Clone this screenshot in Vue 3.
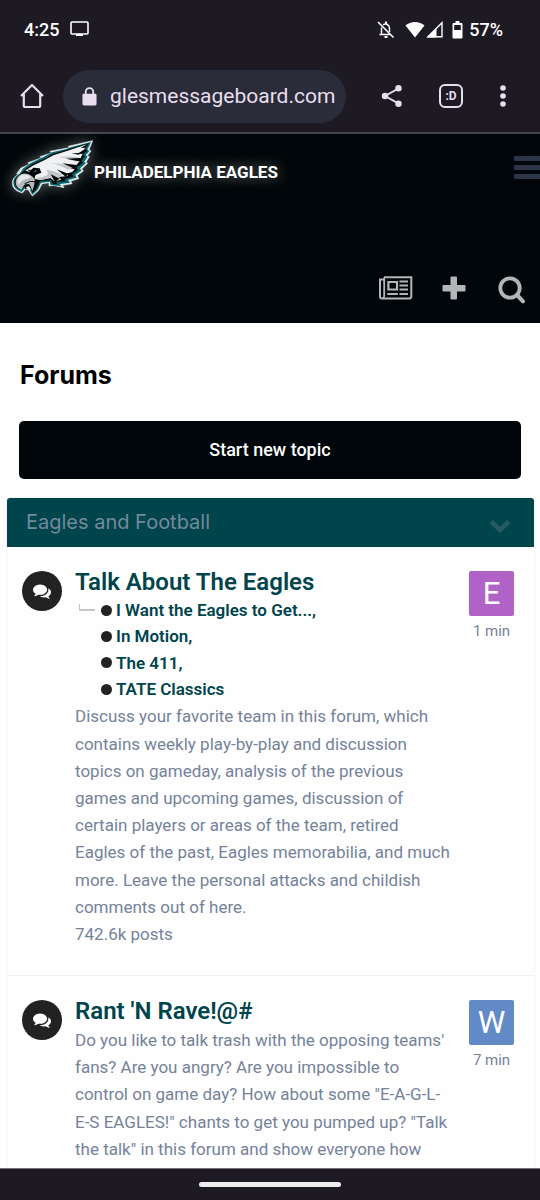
<script setup>
const forums = [
  {
    id: 'talk',
    title: 'Talk About The Eagles',
    children: ['I Want the Eagles to Get...,', 'In Motion,', 'The 411,', 'TATE Classics'],
    text: 'Discuss your favorite team in this forum, which contains weekly play-by-play and discussion topics on gameday, analysis of the previous games and upcoming games, discussion of certain players or areas of the team, retired Eagles of the past, Eagles memorabilia, and much more. Leave the personal attacks and childish comments out of here.',
    posts: '742.6k posts',
    letter: 'E',
    tone: 'purple',
    time: '1 min',
  },
  {
    id: 'rant',
    title: "Rant 'N Rave!@#",
    children: [],
    text: 'Do you like to talk trash with the opposing teams\' fans? Are you angry? Are you impossible to control on game day? How about some "E-A-G-L-E-S EAGLES!" chants to get you pumped up? "Talk the talk" in this forum and show everyone how',
    posts: '',
    letter: 'W',
    tone: 'blue',
    time: '7 min',
  },
]
</script>

<template>
  <div class="screen">
    <div class="status">
      <span class="clock">4:25</span>
      <svg class="cast" width="20" height="17" viewBox="0 0 20 17">
        <rect x="1" y="1" width="17" height="12" rx="1" fill="none" stroke="#fff" stroke-width="1.6" />
        <path d="M6 13h7v2H6z" fill="#fff" />
      </svg>
      <span class="grow"></span>
      <svg class="bell" width="18" height="18" viewBox="0 0 18 18" fill="none" stroke="#fff" stroke-width="1.5">
        <path d="M1 1l15.500 15.500M4.500 6.500V13M2.500 13.500H13M6 3.800C8.800 1.800 12.500 3.800 12.500 7.500V11" />
        <path d="M9 .5V3M7.500 16h3" stroke-width="2" />
      </svg>
      <svg class="wifi" width="20" height="17" viewBox="0 0 20 17">
        <path d="M10 16.500L.5 4.500Q4.500 1 10 1T19.500 4.500z" fill="#fff" />
      </svg>
      <svg class="signal" width="18" height="17" viewBox="0 0 18 17">
        <path d="M2 15.800L16 1.800V15.800z" fill="none" stroke="#fff" stroke-width="1.400" />
        <path d="M1 16.500L10.500 7V16.500z" fill="#fff" />
      </svg>
      <svg class="battery" width="11" height="18" viewBox="0 0 11 18">
        <path d="M3.500 0h4v2h2q1 0 1 1v13.500q0 1-1 1h-8q-1 0-1-1V3q0-1 1-1h2z" fill="#fff" />
        <path d="M2.200 4h6.600v5H2.200z" fill="#1d1a24" />
      </svg>
      <span class="clock">57%</span>
    </div>

    <div class="browser">
      <button class="tool home" aria-label="Home">
        <svg width="26" height="26" viewBox="0 0 26 26" fill="none" stroke="#e8deee" stroke-width="2.200" stroke-linejoin="round">
          <path d="M2 13L13 2L24 13M4.800 11V22.500Q4.800 24 6.300 24H19.700Q21.200 24 21.200 22.500V11" />
        </svg>
      </button>
      <div class="address">
        <svg width="15" height="19" viewBox="0 0 16 20">
          <path d="M4 8V5a4 4 0 0 1 8 0V8" fill="none" stroke="#e8deee" stroke-width="1.900" />
          <rect x=".5" y="7" width="15" height="12.500" rx="1.500" fill="#e8deee" />
        </svg>
        <input class="url" type="text" value="glesmessageboard.com" aria-label="Address" />
      </div>
      <button class="tool share" aria-label="Share">
        <svg width="22" height="24" viewBox="0 0 22 24">
          <path d="M17.500 4.500L4 12L17.500 19.500" fill="none" stroke="#e8deee" stroke-width="2" />
          <circle cx="17.500" cy="4.300" r="3.200" fill="#e8deee" />
          <circle cx="4" cy="12" r="3.200" fill="#e8deee" />
          <circle cx="17.500" cy="19.700" r="3.200" fill="#e8deee" />
        </svg>
      </button>
      <button class="tool tabs" aria-label="Tabs">:D</button>
      <button class="tool more" aria-label="More">
        <svg width="6" height="22" viewBox="0 0 6 22" fill="#e8deee">
          <circle cx="3" cy="3" r="2.800" />
          <circle cx="3" cy="11" r="2.800" />
          <circle cx="3" cy="19" r="2.800" />
        </svg>
      </button>
    </div>

    <header class="site">
      <div class="brandrow">
        <a class="brand" href="#">
          <svg class="eagle" width="84" height="62" viewBox="30 20 252 186" stroke-linejoin="round">
            <path d="M278 31L205 48L208 52L150 63L154 68L120 79L124 83L84 97L88 102L63 113L50 130L58 130Q38 140 37 157Q36 180 67 188L75 178L84 177L97 197L116 180L126 160L147 157L147 167L160 165L192 172L188 165L216 160L212 152L236 145L232 135L250 122L245 116L263 99L258 96L268 79L262 76L273 62L267 58Z" fill="#e6eaeb" stroke="#e6eaeb" stroke-width="2" />
            <path d="M273 35L212 51L198 57L156 66L132 79L94 97L70 114L58 131Q40 140 40 157Q41 177 65 185L73 175L87 174L97 193L113 178L123 157L150 154L151 163L184 168L179 161L210 157L204 149L230 142L226 133L244 121L240 114L258 98L252 95L263 79L257 75L268 62L262 58Z" fill="#00686e" />
            <path d="M268 38L210 55L158 71L133 85L98 101L77 116L63 131Q45 139 44 157Q45 173 64 180L72 169L89 168L98 187L109 175L120 152L154 149L156 159L172 163L169 154L198 153L193 146L221 139L216 131L234 119L230 111L249 97L244 92L255 77L248 73L262 60L254 56Z" fill="#020607" />
            <path d="M261 42L210 59L160 75L134 89L98 106L76 121L88 124L100 112L119 114L124 127L106 134L104 146L122 149L151 143L164 152L184 148L176 140L204 137L199 130L217 125L224 117L211 114L229 105L239 92L225 91L242 83L248 70L235 69L252 58L255 52L242 53Z" fill="#f0f1f3" />
            <path d="M137 118Q166 121 188 133L176 140L184 148L164 152L151 143L122 149L106 142L130 139Q154 133 137 118ZM152 98Q190 99 220 110L204 119Q181 103 152 98ZM174 80Q208 76 242 82L229 94Q204 83 174 80Z" fill="#c3c5cb" />
            <path d="M248 68L215 69L235 73ZM242 83L198 85L236 93ZM230 104L187 99L224 115ZM204 130L170 117L198 140ZM179 145L152 132L165 154Z" fill="#020607" />
            <path d="M64 131Q82 127 95 137Q107 145 104 155Q103 168 97 182L90 165Q80 158 72 165L64 179Q47 171 47 156Q48 140 64 131Z" fill="#b5b8bc" />
            <path d="M66 133Q83 130 94 140L84 145Q66 146 56 163Q46 145 66 133Z" fill="#e6e8ea" />
            <path d="M62 130Q75 121 92 129L106 133L120 124M84 120L110 120M74 160Q92 150 105 154" fill="none" stroke="#020607" stroke-width="3" />
            <path d="M98 124L111 118L110 127L102 129Z" fill="#020607" />
            <path d="M101 123L109 120L107 125Z" fill="#3ba7aa" />
            <path d="M74 163L88 161L92 172L84 169L76 178Z" fill="#020607" />
            <path d="M77 171L87 168L93 180L84 176Z" fill="#f5f6f7" />
          </svg>
          <span class="name">PHILADELPHIA EAGLES</span>
        </a>
        <button class="menu" aria-label="Menu"><i></i><i></i><i></i></button>
      </div>
      <nav class="actions">
        <a href="#" aria-label="Activity">
          <svg width="34" height="24" viewBox="0 0 34 24" fill="none" stroke="#b3b5b7">
            <path d="M5 1.200H32.300V20.500Q32.300 22.500 30.300 22.500H3Q1 22.500 1 20.500V3.500H5" stroke-width="2" />
            <path d="M5.200 1.500V20Q5.200 22 3.500 22.300" stroke-width="1.800" />
            <path d="M9.400 6H18V13.500H9.400Z" stroke-width="2.200" />
            <path d="M20.500 5.500H29M20.500 9.500H29M20.500 13.500H29M20.500 18H29M8.300 18H18.800" stroke-width="1.800" />
          </svg>
        </a>
        <a href="#" aria-label="Create">
          <svg width="24" height="24" viewBox="0 0 24 24" fill="#b3b5b7">
            <path d="M9.500.5h4.500q1 0 1 1V9h7.500q1 0 1 1v4.500q0 1-1 1H15V22.500q0 1-1 1H9.500q-1 0-1-1V15.500H1.500q-1 0-1-1V10q0-1 1-1H8.500V1.500q0-1 1-1z" />
          </svg>
        </a>
        <a href="#" aria-label="Search">
          <svg width="28" height="28" viewBox="0 0 28 28" fill="none" stroke="#b3b5b7" stroke-linecap="round">
            <circle cx="12" cy="12" r="9.700" stroke-width="3.800" />
            <path d="M19 19L25 25.300" stroke-width="4" />
          </svg>
        </a>
      </nav>
    </header>

    <main class="page">
      <h1>Forums</h1>
      <button class="start">Start new topic</button>
      <section class="category">
        <h2 class="bar">
          <a href="#">Eagles and Football</a>
          <button class="toggle" aria-label="Toggle category">
            <svg width="22" height="14" viewBox="0 0 22 14">
              <path d="M2 2.500L11 11L20 2.500" fill="none" stroke="#255b64" stroke-width="4.500" />
            </svg>
          </button>
        </h2>
        <article v-for="forum in forums" :key="forum.id" class="forum">
          <span class="bubble">
            <svg width="18" height="18" viewBox="0 0 1792 1792" fill="#fff">
              <path d="M1408 768q0 139-94 257t-256.500 186.500-353.500 68.500q-86 0-176-16-124 88-278 128-36 9-86 16h-3q-11 0-20.500-8t-11.500-21q-1-3-1-6.500t.5-6.500 2-6l2.500-5 3.500-5.500 4-5 4.500-5 4-4.500q5-6 23-25t26-29.500 22.500-29 25-38.500 20.500-44q-124-72-195-177t-71-224q0-139 94-257t256.500-186.500 353.500-68.500 353.500 68.500 256.500 186.500 94 257zm384 256q0 120-71 224.500t-195 176.500q10 24 20.500 44t25 38.500 22.500 29 26 29.500 23 25q1 1 4 4.500t4.500 5 4 5 3.500 5.500l2.500 5 2 6 .5 6.500-1 6.500q-3 14-13 22t-22 7q-50-7-86-16-154-40-278-128-90 16-176 16-271 0-472-132 58 4 88 4 161 0 309-45t264-129q125-92 192-212t67-254q0-77-23-152 129 71 204 178t75 230z" />
            </svg>
          </span>
          <div class="body">
            <h3><a href="#">{{ forum.title }}</a></h3>
            <div v-if="forum.children.length" class="nested">
              <span class="branch"></span>
              <ul>
                <li v-for="child in forum.children" :key="child">
                  <span class="dot"></span><a href="#">{{ child }}</a>
                </li>
              </ul>
            </div>
            <p class="about">{{ forum.text }}</p>
            <p v-if="forum.posts">{{ forum.posts }}</p>
          </div>
          <div class="last">
            <a href="#" class="avatar" :class="forum.tone">{{ forum.letter }}</a>
            <time>{{ forum.time }}</time>
          </div>
        </article>
      </section>
    </main>

    <footer class="gesture"><span></span></footer>
  </div>
</template>

<style>
body {
  margin: 0;
  background: #fff;
}
</style>

<style scoped>
* {
  box-sizing: border-box;
}
.screen {
  display: flex;
  flex-direction: column;
  height: 100vh;
  overflow: hidden;
  font-family: Roboto, "Liberation Sans", sans-serif;
  color: #000;
}
a {
  color: inherit;
  text-decoration: none;
}
button {
  padding: 0;
  border: 0;
  background: none;
  font: inherit;
  cursor: pointer;
}
svg {
  display: block;
  flex: none;
}
h1, h2, h3, p, ul {
  margin: 0;
  padding: 0;
}
.status {
  flex: none;
  display: flex;
  align-items: center;
  height: 60px;
  padding: 0 37px 1px 24px;
  background: #1d1a24;
}
.clock {
  color: #fff;
  font-size: 18px;
  font-weight: 500;
}
.cast {
  margin-left: 11px;
}
.grow {
  flex: 1;
}
.bell {
  margin-right: 10px;
}
.signal {
  margin-left: 1px;
}
.battery {
  margin: 0 6px 0 8px;
}
.browser {
  flex: none;
  display: flex;
  align-items: center;
  height: 74px;
  padding: 0 34px 0 19px;
  background: #1d1a24;
  border-bottom: 2px solid #48434f;
}
.tool {
  flex: none;
  display: flex;
}
.address {
  flex: 1;
  display: flex;
  align-items: center;
  gap: 13px;
  min-width: 0;
  height: 53px;
  margin: 0 35px 0 18px;
  padding: 0 9px 0 19px;
  border-radius: 27px;
  background: #2b2c3a;
}
.url {
  flex: 1;
  min-width: 0;
  padding: 0;
  border: 0;
  outline: 0;
  background: none;
  color: #e8deee;
  font: 21px Roboto, sans-serif;
}
.tabs {
  width: 24px;
  height: 24px;
  margin: 0 37px 0 36px;
  align-items: center;
  justify-content: center;
  border: 2px solid #e8deee;
  border-radius: 6px;
  color: #e8deee;
  font-size: 12px;
  font-weight: 700;
}
.site {
  flex: none;
  display: flex;
  flex-direction: column;
  justify-content: space-between;
  height: 189px;
  padding: 3px 0 19px 10px;
  background: #000609;
}
.brandrow {
  display: flex;
  justify-content: space-between;
}
.brand {
  display: flex;
  align-items: center;
}
.eagle {
  overflow: visible;
  filter: drop-shadow(0 0 7px rgba(255, 255, 255, 0.35));
}
.name {
  padding-top: 8px;
  color: #fff;
  font-size: 17px;
  font-weight: 700;
  text-shadow: 0 0 14px rgba(255, 255, 255, 0.5);
  white-space: nowrap;
}
.menu {
  display: flex;
  flex-direction: column;
  gap: 4px;
  padding-top: 19px;
}
.menu i {
  width: 26px;
  height: 5px;
  border-radius: 1px 0 0 1px;
  background: #2c3547;
}
.actions {
  display: flex;
  justify-content: flex-end;
  gap: 24px;
  padding-right: 11px;
}
.actions a {
  display: flex;
  justify-content: center;
  width: 34px;
}
.page {
  flex: 1;
  min-height: 0;
  overflow-y: auto;
  scrollbar-width: none;
  background: #fefefe;
}
h1 {
  padding: 36px 20px 30px;
  font: 700 25px/32px Inter, sans-serif;
}
.start {
  display: block;
  width: calc(100% - 38px);
  height: 58px;
  margin: 0 19px;
  padding-bottom: 2px;
  border-radius: 5px;
  background: #000609;
  color: #fff;
  font-size: 18px;
  font-weight: 500;
}
.category {
  margin: 18px 5px 0 6px;
  border: 1px solid #f5f5f6;
  border-radius: 4px;
}
.bar {
  display: flex;
  align-items: center;
  justify-content: space-between;
  height: 49px;
  padding: 0 23px 2px 19px;
  border-radius: 3px 3px 0 0;
  background: #00444c;
  color: #74899a;
  font: 400 20px/24px Inter, sans-serif;
}
.toggle {
  padding-top: 8px;
}
.forum {
  display: flex;
  align-items: flex-start;
  padding: 20px 20px 27px 15px;
}
.forum + .forum {
  border-top: 1px solid #f0f1f3;
}
.bubble {
  flex: none;
  display: flex;
  align-items: center;
  justify-content: center;
  width: 40px;
  height: 40px;
  margin: 4px 13px 0 0;
  border-radius: 50%;
  background: #222;
}
.body {
  flex: 1;
  min-width: 0;
  color: #75829a;
  font-size: 17px;
  line-height: 1.6;
}
h3 {
  color: #00444c;
  font-size: 24px;
  font-weight: 600;
  line-height: 30px;
}
.nested {
  display: flex;
  color: #00444c;
  font-weight: 600;
}
.branch {
  width: 16px;
  height: 7px;
  margin: 7px 6px 0 4px;
  border: solid #c6c6c6;
  border-width: 0 0 2px 1px;
}
ul {
  list-style: none;
}
li {
  display: flex;
  align-items: center;
  gap: 4px;
  line-height: 1.55;
}
.dot {
  width: 11px;
  height: 11px;
  border-radius: 50%;
  background: #222;
}
.about {
  padding-top: 1px;
}
.last {
  flex: none;
  display: flex;
  flex-direction: column;
  align-items: center;
  gap: 6px;
  width: 45px;
  margin: 4px 0 0 16px;
  color: #75829a;
  font-size: 15px;
  line-height: 18px;
  white-space: nowrap;
}
.avatar {
  display: flex;
  align-items: center;
  justify-content: center;
  width: 45px;
  height: 45px;
  border-radius: 2px;
  color: #fff;
  font: 31px Roboto, sans-serif;
}
.purple {
  background: #b162c6;
}
.blue {
  background: #628ac6;
}
.gesture {
  flex: none;
  display: flex;
  align-items: center;
  justify-content: center;
  height: 32px;
  border-top: 1px solid #77737c;
  background: #1d1a24;
}
.gesture span {
  width: 142px;
  height: 5px;
  border-radius: 3px;
  background: #eee;
}
</style>
